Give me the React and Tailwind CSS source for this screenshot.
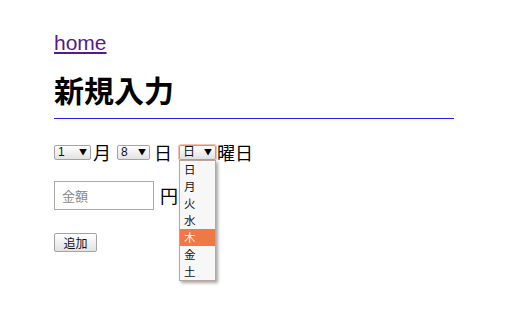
import React from "react";

const DAYS = ["日", "月", "火", "水", "木", "金", "土"];
const JP = "font-['Noto_Sans_CJK_JP','Liberation_Sans',sans-serif]";

function MiniSelect({ value, options, width, focused }) {
  return (
    <span className={`relative inline-flex ${width}`}>
      <select
        defaultValue={value}
        className={`appearance-none h-[15px] w-full rounded-[2px] border bg-gradient-to-b from-white to-[#e2e2e2] pl-[3px] text-[12px] leading-[13px] text-[#111] outline-none font-['Liberation_Sans','Noto_Sans_CJK_JP',sans-serif] ${
          focused
            ? "border-[#e0906f] shadow-[0_0_0_1px_#f2c2ad]"
            : "border-[#a3a3a3]"
        }`}
      >
        {options.map((o) => (
          <option key={o} value={o}>
            {o}
          </option>
        ))}
      </select>
      <span className="pointer-events-none absolute right-[4px] top-[3px] text-[8px] leading-[8px] text-black">
        ▼
      </span>
    </span>
  );
}

export default function App() {
  const months = Array.from({ length: 12 }, (_, i) => String(i + 1));
  const dates = Array.from({ length: 31 }, (_, i) => String(i + 1));

  return (
    <div className="min-h-[333px] bg-white font-['Liberation_Sans',Arial,sans-serif] text-black">
      <div className="ml-[54px] w-[400px] pt-[31px]">
        <a href="#" className="block w-fit text-[21px] leading-[24px] text-[#551a8b] underline">
          home
        </a>

        <h1
          className={`mt-[17px] border-b border-b-[#1c1cf0] pb-[12px] text-[30px] font-bold leading-[34px] ${JP}`}
        >
          新規入力
        </h1>

        <div className={`mt-[22px] flex items-center h-[22px] text-[18px] ${JP}`}>
          <MiniSelect value="1" options={months} width="w-[37px]" />
          <span className="ml-[2px]">月</span>
          <span className="ml-[6px] inline-flex">
            <MiniSelect value="8" options={dates} width="w-[33px]" />
          </span>
          <span className="ml-[4px]">日</span>
          <span className="relative ml-[7px] inline-flex">
            <MiniSelect value="日" options={DAYS} width="w-[37px]" focused />
            <ul className="absolute left-0 top-[15px] z-10 w-[37px] border border-[#b7a79f] bg-[#f7f7f7] shadow-[2px_2px_3px_rgba(0,0,0,0.35)] text-[11.5px] leading-[17px]">
              {DAYS.map((d) => (
                <li
                  key={d}
                  className={`h-[17px] pl-[4px] ${
                    d === "木" ? "bg-[#f07746] text-white" : "text-[#111]"
                  }`}
                >
                  {d}
                </li>
              ))}
            </ul>
          </span>
          <span className="ml-[1px]">曜日</span>
        </div>

        <div className={`mt-[18px] flex items-center ${JP}`}>
          <input
            type="text"
            placeholder="金額"
            className="h-[29px] w-[100px] border border-[#a9a9a9] px-[7px] text-[13px] placeholder:text-[#8a8a8a] outline-none"
          />
          <span className="ml-[6px] text-[18px]">円</span>
        </div>

        <button
          className={`mt-[23px] h-[19px] w-[43px] rounded-[2px] border border-[#a3a3a3] bg-gradient-to-b from-white to-[#e2e2e2] text-[12px] leading-[15px] text-[#111] ${JP}`}
        >
          追加
        </button>
      </div>
    </div>
  );
}
